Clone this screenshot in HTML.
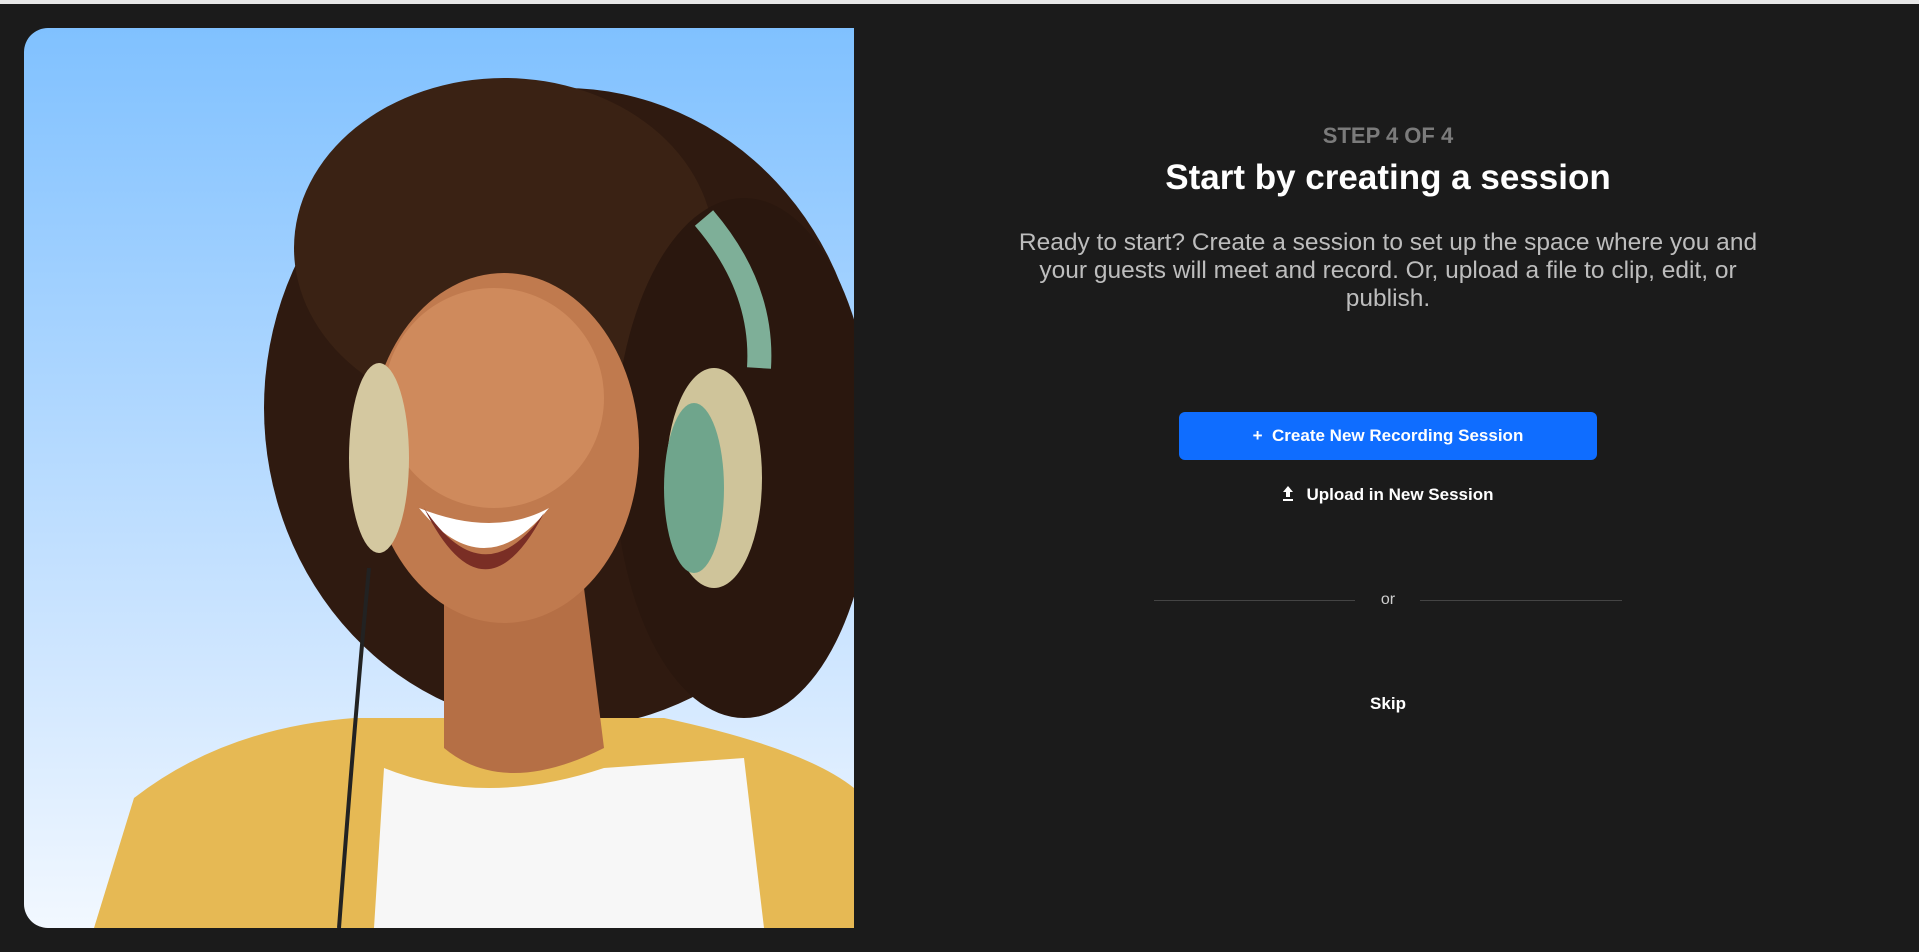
<!DOCTYPE html>
<html><head><meta charset="utf-8"><style>
html,body{margin:0;padding:0;}
body{width:1919px;height:952px;background:#1b1b1b;position:relative;overflow:hidden;font-family:"Liberation Sans",sans-serif;}
.top{position:absolute;left:0;top:0;width:1919px;height:4px;background:#e8e8e8;}
.card{position:absolute;left:24px;top:28px;width:830px;height:900px;border-radius:24px 0 0 24px;overflow:hidden;background:linear-gradient(#80c1ff,#cfe6ff 70%,#f2f8ff);}
.c{position:absolute;left:1006px;width:764px;text-align:center;}
</style></head><body>
<div class="top"></div>
<div class="card">
<svg width="830" height="900" viewBox="0 0 830 900">
<ellipse cx="540" cy="380" rx="300" ry="320" fill="#2f1a10"/>
<ellipse cx="480" cy="220" rx="210" ry="170" fill="#3a2214"/>
<ellipse cx="720" cy="430" rx="130" ry="260" fill="#2a170e"/>
<path d="M70 900 L110 770 Q200 700 330 690 L640 690 Q780 720 830 760 L830 900Z" fill="#e6b954"/>
<path d="M350 900 L360 740 Q460 780 580 740 L720 730 L740 900Z" fill="#f7f7f7"/>
<path d="M420 560 L420 720 Q480 770 580 720 L560 560Z" fill="#b56f45"/>
<ellipse cx="480" cy="420" rx="135" ry="175" fill="#c07a4e"/>
<ellipse cx="470" cy="370" rx="110" ry="110" fill="#cf8a5c"/>
<path d="M395 480 Q460 560 525 480 Q470 510 395 480Z" fill="#fff"/>
<path d="M400 480 Q460 570 520 485 Q460 600 400 480Z" fill="#7a2e25"/>
<ellipse cx="690" cy="450" rx="48" ry="110" fill="#cfc49a"/>
<ellipse cx="670" cy="460" rx="30" ry="85" fill="#6fa58c"/>
<ellipse cx="355" cy="430" rx="30" ry="95" fill="#d4c8a0"/>
<path d="M680 190 Q740 260 735 340" stroke="#7eaf98" stroke-width="24" fill="none"/>
<path d="M345 540 Q330 700 315 900" stroke="#222" stroke-width="4" fill="none"/>
</svg>
</div>
<div class="c" style="top:123px;font-size:22px;font-weight:bold;color:#7b7b7b;">STEP 4 OF 4</div>
<div class="c" style="top:158px;font-size:35px;font-weight:bold;color:#fff;">Start by creating a session</div>
<div class="c" style="left:963px;width:850px;top:229px;font-size:24.5px;line-height:28px;color:#bdbdbd;">Ready to start? Create a session to set up the space where you and<br>your guests will meet and record. Or, upload a file to clip, edit, or<br>publish.</div>
<div style="position:absolute;left:1179px;top:412px;width:418px;height:48px;border-radius:6px;background:#0f6dff;color:#fff;font-size:17px;font-weight:bold;text-align:center;line-height:48px;">+&nbsp;&nbsp;Create New Recording Session</div>
<div class="c" style="top:485px;font-size:17px;font-weight:bold;color:#fff;"><span style="display:inline-block;vertical-align:middle;margin-right:12px;"><svg width="12" height="16" viewBox="0 0 12 16"><path d="M6 1 L1 7 H4 V12 H8 V7 H11Z M1 14 H11 V16 H1Z" fill="#fff"/></svg></span>Upload in New Session</div>
<div style="position:absolute;left:1154px;top:600px;width:201px;height:1px;background:#444;"></div>
<div style="position:absolute;left:1420px;top:600px;width:202px;height:1px;background:#444;"></div>
<div class="c" style="top:591px;font-size:16px;color:#cfcfcf;">or</div>
<div class="c" style="top:694px;font-size:17px;font-weight:bold;color:#fff;">Skip</div>
</body></html>
